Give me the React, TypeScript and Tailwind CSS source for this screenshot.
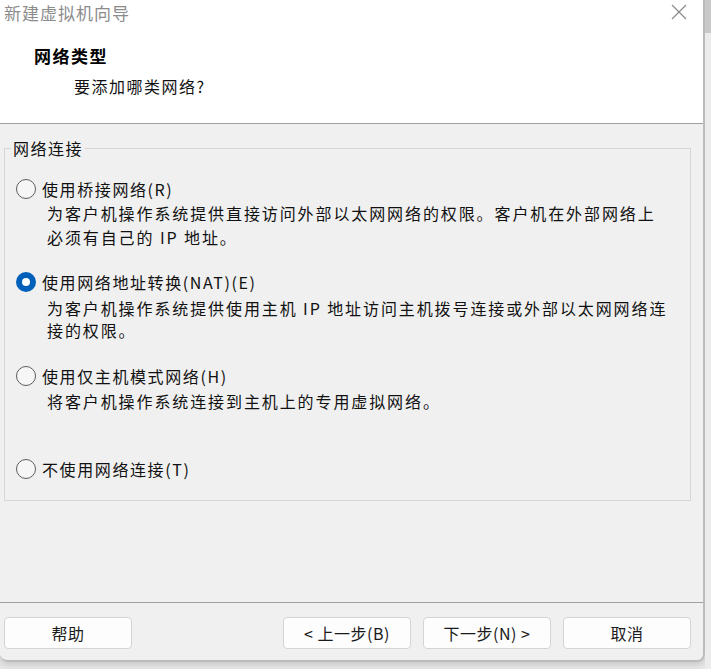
import React from "react";

const font = { fontFamily: '"Noto Sans CJK SC", "Noto Sans", sans-serif' };

function Radio({ checked }: { checked?: boolean }) {
  if (checked) {
    return (
      <span className="w-[20px] h-[20px] rounded-full bg-[#005fb8] flex items-center justify-center shrink-0">
        <span className="w-[8px] h-[8px] rounded-full bg-white" />
      </span>
    );
  }
  return <span className="w-[20px] h-[20px] rounded-full border border-[#5c5c5c] bg-[#f6f6f6] shrink-0" />;
}

function Btn({ children }: { children: React.ReactNode }) {
  return (
    <div className="w-[128px] h-[32px] rounded-[4px] border border-[#d4d4d4] bg-[#fdfdfd] flex items-center justify-center text-[16px] text-[#1a1a1a] tracking-[0.5px]">
      {children}
    </div>
  );
}

export default function App() {
  return (
    <div className="w-[711px] h-[669px] bg-[#e6e6e6] flex overflow-hidden" style={font}>
      <div className="w-[705px] h-[662px] shrink-0 flex flex-col border-r-2 border-b-2 border-[#bcbcbc] rounded-b-[8px] overflow-hidden shadow-[0_2px_6px_rgba(0,0,0,0.15)]">
        {/* header */}
        <div className="h-[124px] shrink-0 bg-white border-b border-[#a0a0a0] flex flex-col">
          <div className="h-[26px] flex items-start justify-between pl-[4px] pr-[16px]">
            <span className="text-[17px] leading-[26px] text-[#8c8c8c] tracking-[1px]">新建虚拟机向导</span>
            <svg className="mt-[4px]" width="16" height="16" viewBox="0 0 16 16">
              <path d="M1 1 L15 15 M15 1 L1 15" stroke="#8a8a8a" strokeWidth="1.2" fill="none" />
            </svg>
          </div>
          <div className="mt-[18px] pl-[34px] font-bold text-[17px] leading-[24px] tracking-[1.5px] text-black">网络类型</div>
          <div className="mt-[6px] pl-[74px] text-[16px] leading-[24px] tracking-[1.5px] text-[#111]">要添加哪类网络?</div>
        </div>

        {/* body */}
        <div className="flex-1 bg-[#f0f0f0] flex flex-col">
          <div className="mt-[24px] ml-[4px] mr-[12px] border border-[#d6d6d6] pb-[19px] flex flex-col text-[#111]">
            <div className="-mt-[13px] ml-[6px] self-start bg-[#f0f0f0] px-[2px] h-[24px] leading-[24px] text-[16px] tracking-[1.5px]">网络连接</div>

            <div className="mt-[17px] ml-[11px] h-[24px] flex items-center gap-[6px]">
              <Radio />
              <span className="text-[16px] leading-[24px] tracking-[1.6px]">使用桥接网络(R)</span>
            </div>
            <div className="pl-[42px] text-[16px] leading-[24px] tracking-[1.9px]">
              <div>为客户机操作系统提供直接访问外部以太网网络的权限。客户机在外部网络上</div>
              <div>必须有自己的 IP 地址。</div>
            </div>

            <div className="mt-[21px] ml-[11px] h-[24px] flex items-center gap-[6px]">
              <Radio checked />
              <span className="text-[16px] leading-[24px] tracking-[1.6px]">使用网络地址转换(NAT)(E)</span>
            </div>
            <div className="mt-[3px] pl-[42px] text-[16px] leading-[22px] tracking-[1.9px]">
              <div>为客户机操作系统提供使用主机 IP 地址访问主机拨号连接或外部以太网网络连</div>
              <div>接的权限。</div>
            </div>

            <div className="mt-[23px] ml-[11px] h-[24px] flex items-center gap-[6px]">
              <Radio />
              <span className="text-[16px] leading-[24px] tracking-[1.6px]">使用仅主机模式网络(H)</span>
            </div>
            <div className="mt-[1px] pl-[42px] text-[16px] leading-[24px] tracking-[1.9px]">
              <div>将客户机操作系统连接到主机上的专用虚拟网络。</div>
            </div>

            <div className="mt-[44px] ml-[11px] h-[24px] flex items-center gap-[6px]">
              <Radio />
              <span className="text-[16px] leading-[24px] tracking-[1.6px]">不使用网络连接(T)</span>
            </div>
          </div>
        </div>

        {/* footer */}
        <div className="shrink-0 bg-[#f0f0f0] border-t border-[#a0a0a0] pt-[14px] pb-[11px] pl-[4px] pr-[12px] flex justify-between">
          <Btn>帮助</Btn>
          <div className="flex gap-[12px]">
            <Btn>&lt; 上一步(B)</Btn>
            <Btn>下一步(N) &gt;</Btn>
            <Btn>取消</Btn>
          </div>
        </div>
      </div>
      <div className="flex-1 flex flex-col">
        <div className="h-[33px] bg-[#c9c9c9]" />
        <div className="flex-1 bg-[#ececec]" />
      </div>
    </div>
  );
}
